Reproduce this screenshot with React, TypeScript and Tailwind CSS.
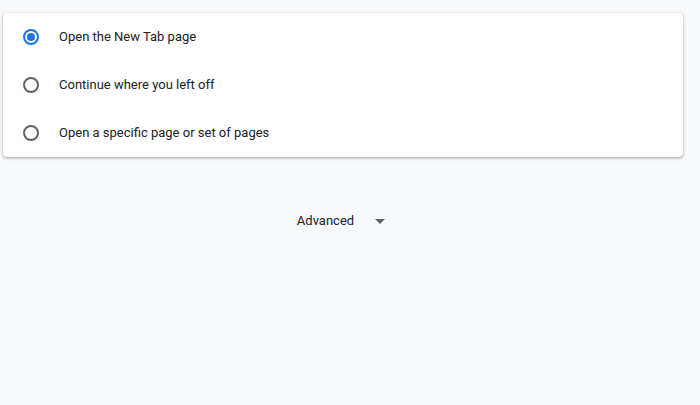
import React, { useState } from 'react';

const options = [
  'Open the New Tab page',
  'Continue where you left off',
  'Open a specific page or set of pages',
];

const App = () => {
  const [selected, setSelected] = useState(0);

  return (
    <div className="min-h-[405px] bg-[#f8f9fa] pt-[13px] pl-[3px] pr-[17px] font-['Roboto',sans-serif] text-[13px] text-[#202124]">
      {/* Startup options card */}
      <div className="bg-white rounded-[4px] shadow-[0_1px_2px_0_rgba(60,64,67,0.3),0_1px_3px_1px_rgba(60,64,67,0.15)]">
        {options.map((label, i) => (
          <label
            key={label}
            className="flex items-center h-12 pl-5 cursor-pointer"
            onClick={() => setSelected(i)}
          >
            <span
              className={
                selected === i
                  ? 'w-4 h-4 rounded-full border-2 border-[#1a73e8] flex items-center justify-center'
                  : 'w-4 h-4 rounded-full border-2 border-[#5f6368] flex items-center justify-center'
              }
            >
              {selected === i && <span className="w-2 h-2 rounded-full bg-[#1a73e8]" />}
            </span>
            <span className="ml-5">{label}</span>
          </label>
        ))}
      </div>

      {/* Advanced toggle */}
      <div className="flex justify-center mt-[52px]">
        <button className="flex items-center h-6 text-[#202124] pl-[3px]">
          <span>Advanced</span>
          <svg className="ml-[14px]" width="24" height="24" viewBox="0 0 24 24" fill="#5f6368">
            <path d="M7 10l5 5 5-5z" />
          </svg>
        </button>
      </div>
    </div>
  );
};

export default App;
